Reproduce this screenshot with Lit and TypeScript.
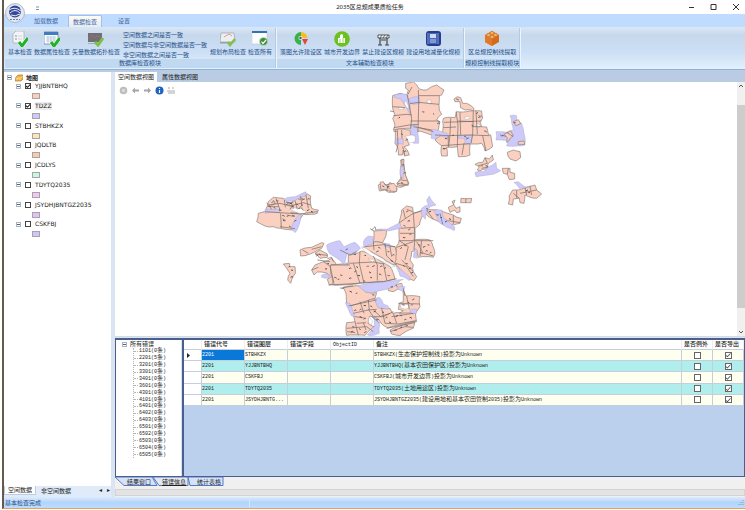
import { LitElement, html, svg, css } from "lit";
import { customElement } from "lit/decorators.js";

type Shape = string;

/* Survey parcels, north-east sheet. */
const northFarm: Shape[] = [
  "107,25 130,20 140,30 148,42 170,45 185,35 200,30 222,45 215,60 208,62 207,90 208,105 215,118 200,135 210,140 205,165 185,180 150,168 140,172 120,160 70,165 75,150 68,130 75,120 68,100 68,62 90,55 110,60 115,45 107,40",
  "75,165 100,162 120,165 125,185 110,190 118,210 102,215 112,225 118,240 103,243 100,225 97,240 85,240 82,215 75,205",
  "220,130 255,128 260,110 300,108 335,108 338,130 330,140 335,155 350,156 355,178 362,180 368,215 345,228 335,205 300,207 300,240 265,245 262,215 230,217 232,243 215,243 215,212 205,205 195,195 215,180 220,150",
  "252,72 262,65 272,68 278,85 290,85 300,90 312,100 310,107 285,105 272,98 270,80 255,80",
  "412,232 430,225 450,230 452,248 438,258 420,252",
  "315,268 338,262 345,248 358,252 367,240 370,255 355,265 350,282 330,288 322,285 328,275",
  "397,280 420,280 420,292 434,295 434,312 418,314 412,298 400,295",
  "428,345 445,345 495,330 500,345 515,357 500,370 465,360 462,385 450,383 448,370 430,372 428,390 415,387 418,362",
  "92,255 100,252 104,290 110,310 117,325 100,335 80,335 85,320 92,310",
  "25,330 35,325 50,335 60,322 70,330 82,342 75,352 55,352 45,345 28,348",
];
const northBuilt: Shape[] = [
  "72,60 90,56 110,58 122,80 120,118 112,104 100,84 92,72 74,68",
  "116,72 132,65 148,66 150,85 128,88",
  "122,152 138,150 146,205 130,205 134,182 122,178",
  "185,163 235,178 232,188 205,180 198,193 183,190",
  "76,192 100,192 100,208 78,208",
  "262,182 305,180 303,207 285,207 284,190 264,190",
  "420,122 440,122 440,135 455,145 462,175 465,210 410,213 414,198 378,195 378,170 410,172 430,165 425,145",
  "315,292 340,290 355,275 378,262 380,280 392,287 370,298 318,305",
  "432,322 445,320 465,335 485,332 462,340 448,340",
  "92,275 98,275 98,305 90,300",
];
const northInset: Shape[] = [
  "430,140 445,134 452,146 437,152",
  "402,178 422,168 430,182 416,198 410,202 412,188",
  "445,200 462,198 464,209 444,208",
];
const northGaps: Shape[] = [
  "172,75 183,75 183,88 172,84",
  "86,96 98,94 102,102 88,104",
  "103,76 112,84 117,102 109,97",
  "105,184 124,180 136,184 135,200 118,204 112,192",
  "283,127 298,124 300,130 286,134",
  "320,145 330,150 328,158 320,154",
];
const northLines: Shape[] = [
  "112,60 125,130 122,160", "145,45 146,90 144,170", "120,86 145,82 207,88", "145,62 208,62", "70,122 110,118 125,120",
  "122,138 200,138 210,140", "72,158 118,150 145,148", "69,95 105,98", "148,158 190,170", "82,165 84,210 78,232",
  "95,165 96,190", "130,155 185,165", "242,130 240,180 236,215", "258,110 264,150 262,215", "310,108 308,180 303,205", "270,112 272,180",
  "222,142 335,138", "195,180 235,182 300,180 358,182", "338,182 348,228", "215,212 300,206", "265,138 310,140", "318,108 322,178",
  "325,122 336,124", "235,182 235,215", "282,205 276,240", "220,158 258,156", "305,155 335,155", "410,172 430,185", "390,180 408,184",
  "345,248 352,265 325,272", "335,280 355,276", "465,338 470,360", "480,334 485,360", "450,355 500,345", "430,355 448,370",
  "440,346 440,370", "415,280 412,298", "80,170 70,168", "60,108 72,110", "98,214 104,240", "126,36 114,58",
  "95,285 106,292", "88,320 112,318", "45,340 60,330", "30,335 55,346", "66,330 60,350", "190,114 192,120", "218,222 230,220",
];

/* Survey parcels, south-west sheet. */
const southFarm: Shape[] = [
  "85,155 100,142 130,145 150,160 165,150 190,130 212,138 215,175 235,180 232,190 190,193 180,208 175,225 160,240 122,235 100,230 75,228 50,215 55,190 75,185",
  "180,300 215,292 245,278 252,280 245,295 220,308 182,318",
  "130,342 148,340 150,350 165,350 166,370 152,400 143,390 150,370 140,355",
  "215,360 225,345 250,335 275,325 290,345 305,370 320,340 335,400 268,405 262,388 272,382 262,370 245,366 232,366 222,375",
  "225,310 240,300 262,312 262,322 240,325",
  "272,345 325,340 325,315 365,303 400,318 450,350 465,388 430,395 350,402 280,405 272,370",
  "370,292 398,275 430,280 465,290 475,340 465,345 430,325",
  "402,243 440,240 438,258 428,278 400,275",
  "478,215 485,180 500,168 518,172 520,190 545,182 552,192 538,225 525,235 522,270 570,270 585,310 580,322 535,322 530,300 515,305 510,330 520,345 520,365 530,380 522,392 505,385 465,340 468,290 478,270",
  "420,97 430,95 435,105 450,102 462,100 470,112 470,125 445,122 422,118",
  "485,30 492,28 495,65 500,85 505,105 480,108 470,100 484,88",
  "560,180 600,182 640,195 664,205 660,220 640,225 625,222 610,225 580,208 560,195",
  "625,172 640,165 645,150 636,155 648,175 660,170 660,186 650,188 644,180 630,187",
  "663,145 695,145 693,158 662,158",
  "310,412 360,408 375,425 410,428 405,445 340,470 320,460 318,430",
  "330,470 405,447 415,472 450,475 458,490 478,488 525,485 530,515 445,534 425,522 412,505 390,498 384,520 402,530 375,556 320,556 320,518 345,515 335,490",
  "488,412 498,438 540,440 540,470 525,490 478,490 490,482 475,478 478,460 490,455",
  "446,410 485,400 488,410 460,425 445,422",
  "450,540 525,516 520,535 480,557 455,552",
];
const southBuilt: Shape[] = [
  "130,148 165,140 198,125 198,138 165,152 140,155",
  "70,185 80,178 120,178 118,188 75,190",
  "165,208 184,192 176,228 165,248 153,235",
  "260,285 300,272 312,290 345,277 362,295 350,305 320,312 315,335 325,345 310,342 280,318 268,310",
  "370,275 385,258 400,260 402,280 372,292",
  "405,240 440,238 480,218 484,232 440,243",
  "545,175 565,165 560,150 568,138 588,165 570,170 562,185 556,208 545,195",
  "580,182 606,180 612,205 622,210 645,232 643,242 620,232 595,215",
  "355,408 430,395 490,388 465,408 440,418 400,428 375,425",
  "468,348 485,360 510,382 508,392 480,378",
  "432,280 450,282 450,292 434,290",
  "525,295 532,300 532,325 520,322",
  "405,445 418,442 430,462 445,468 445,478 415,474",
  "316,458 330,460 345,500 335,498",
  "400,502 412,505 420,525 418,550 402,556 382,555 402,532",
  "510,480 530,478 530,490 515,492",
  "245,375 268,373 266,384 245,382",
  "482,48 490,52 490,85 484,82",
  "470,412 495,410 490,424 478,420",
];
const southGaps: Shape[] = [
  "150,176 185,176 200,186 190,192 166,186",
  "365,290 395,308 430,328 467,348 455,352 420,330 372,302",
  "384,325 405,328 398,338",
  "480,465 508,465 506,475 485,475",
  "388,500 398,515 394,525 385,515",
];
const southLines: Shape[] = [
  "75,185 180,192 232,185", "122,190 124,235", "108,145 120,180", "85,165 120,160 150,168 190,158 212,165", "133,150 136,172", "80,158 95,178",
  "90,170 115,170", "165,152 172,178", "182,138 186,170", "198,135 205,175", "100,150 106,160 94,166", "158,166 150,178", "140,195 165,200", "180,168 190,182",
  "145,162 155,170", "155,160 160,176", "152,188 175,190", "128,205 135,215", "120,230 165,236", "175,148 190,146", "138,158 160,157",
  "250,335 270,348 282,400", "266,405 320,402 430,395 470,386", "340,340 360,400", "360,305 358,340 372,400", "328,340 400,336 432,342", "400,318 412,345 412,392",
  "430,340 440,390", "272,345 330,345", "435,280 440,318", "400,275 402,300", "375,290 430,284 465,290", "440,318 470,345", "450,290 455,320",
  "478,218 520,190 545,182", "520,190 525,260 522,300", "478,272 580,272", "482,235 522,232", "478,272 505,290 495,330", "470,292 520,275", "530,275 550,310 580,318",
  "485,330 520,365", "468,340 500,350 520,380", "500,178 518,185", "490,180 496,205", "480,250 522,250", "545,272 540,318",
  "325,468 410,450", "340,490 385,480 410,478", "385,478 400,500 430,500 460,485", "360,455 372,490", "425,475 435,520 475,522 528,512", "440,535 525,518", "345,515 355,556",
  "320,535 380,530 400,545", "370,518 378,540", "420,500 450,490", "460,490 470,520", "400,480 420,498", "395,500 420,520", "475,460 540,462", "500,438 508,478",
  "490,415 495,438", "455,500 520,490", "450,545 495,530 520,532", "345,500 378,505", "385,450 388,480", "305,414 340,408", "322,545 345,548", "350,520 378,518",
  "300,300 330,315 350,305", "215,360 235,352", "225,312 262,316", "188,300 205,310", "215,298 245,290", "232,330 270,335", "600,190 608,222", "640,196 640,222", "560,180 580,208", "678,145 677,158", "625,212 660,218",
  "395,240 405,230 408,240", "390,236 402,243", "433,100 450,118", "445,102 440,122", "484,90 500,92", "472,100 505,105", "300,414 312,416", "262,326 275,322 280,335",
];
/* Settlement marks scattered over the farmland. */
const southMarks: number[][] = [
  [98,158],[112,152],[88,170],[104,172],[142,164],[152,160],[160,170],[172,162],[190,150],[186,164],[206,148],[130,196],[144,200],[160,196],[132,212],[150,228],[166,214],[120,180],[178,176],[216,184],[204,182],
  [265,340],[258,358],[286,382],[296,390],[304,375],[330,356],[352,350],[346,366],[356,376],[384,350],[390,366],[400,350],[394,382],[424,350],[420,372],[436,356],[446,376],[330,386],[374,392],[320,300],[344,312],[376,318],
  [418,292],[412,306],[446,304],[460,316],[455,332],[484,296],[496,286],[506,214],[494,226],[508,240],[492,262],[512,254],[538,284],[552,292],[566,284],[560,304],[544,308],[572,310],[500,340],[510,356],[492,346],[516,370],
  [374,466],[362,480],[394,468],[404,486],[430,486],[346,482],[362,500],[374,508],[340,530],[336,546],[360,536],[376,548],[412,508],[440,504],[450,516],[470,500],[484,496],[496,510],[512,502],[484,534],[500,526],[466,542],[506,456],[520,450],[490,464],[516,466],
  [430,108],[444,112],[490,44],[494,70],[486,98],[148,352],[156,360],[155,382],[240,312],[232,318],[592,194],[604,204],[630,206],[618,216],[562,176],[570,186],[332,424],[350,432],[400,434],[455,412],[470,406],[502,186],
];
const northMarks: number[][] = [
  [88,130],[160,110],[205,146],[96,176],[110,196],[228,190],[250,182],[286,184],[292,192],[308,150],[328,128],[346,168],[398,184],[434,142],[96,288],[98,300],[50,338],[62,340],[336,274],[350,272],[470,348],[478,352],[106,230],[262,72],[322,116],[222,220],
];

/* Breaks long straight edges into short uneven steps, as surveyed borders have. */
const rough = (shape: Shape): string => {
  const pts = shape.split(" ").map((p) => p.split(",").map(Number));
  return pts
    .flatMap(([x, y], i) => {
      const [nx, ny] = pts[(i + 1) % pts.length];
      const len = Math.hypot(nx - x, ny - y);
      const steps = Math.max(1, Math.floor(len / 10));
      return Array.from({ length: steps }, (_, k) => {
        const t = k / steps;
        const off = k === 0 ? 0 : ((i * 7 + k * 5 + x) % 5) - 2;
        return `${Math.round(x + (nx - x) * t - ((ny - y) / len) * off)},${Math.round(y + (ny - y) * t + ((nx - x) / len) * off)}`;
      });
    })
    .join(" ");
};

const layer = (cls: string, shapes: Shape[]) => svg`<g class=${cls}>${shapes.map((p) => svg`<polygon points=${rough(p)} />`)}</g>`;
const lines = (shapes: Shape[]) => svg`<g class="line">${shapes.map((p) => svg`<polyline points=${p} />`)}</g>`;
const marks = (pts: number[][]) =>
  svg`<g class="mark">${pts.map(([x, y], i) => svg`<path d=${`M${x - 3},${y}l${i % 3 + 2},${(i % 2) * 3 - 2}l3,${i % 4 - 1}`} />`)}</g>`;

const tick = svg`<path d="M7 11l3 4 6-8" fill="none" stroke="#fff" stroke-width="4"/><path d="M7 11l3 4 6-8" fill="none" stroke="#22b22a" stroke-width="3"/>`;
const icon = {
  doc: svg`<path d="M1 3l3-3h8v12H1z" fill="#f2f4f6" stroke="#a3a9b0" stroke-width=".7"/><path d="M3 5h2M3 8h2" stroke="#8d949c"/><path d="M6 5h4M6 8h4" stroke="#c1c7ce" stroke-width=".7"/>${tick}`,
  table: svg`<path d="M0 1h14v12H0z" fill="#fff" stroke="#4d78a8" stroke-width=".7"/><path d="M0 1h14v3H0z" fill="#3f7cc0"/><path d="M2 6h10M2 8h10M2 10h10M4 5v7M7 5v7M10 5v7" stroke="#9fb6cf" stroke-width=".6"/>${tick}`,
  topo: svg`<path d="M0 2h14v9H0z" fill="#6b7178"/><path d="M1 8l3-4 3 3 2-2 4 1" stroke="#d65a5a" stroke-width=".8" fill="none"/><path d="M0 12h12v1H0z" fill="#a5acb3"/><path d="M7 11l3 3 5-7" stroke="#7cc142" stroke-width="3" fill="none"/>`,
  plan: svg`<path d="M1 2h13l1 9H0z" fill="#eceff2" stroke="#9aa2ab" stroke-width=".7"/><path d="M4 6l5-3 3 2" fill="none" stroke="#d99" stroke-width="1"/><path d="M0 11h13v1.500H0z" fill="#98a0aa"/><path d="M8 11l2 3 5-6" stroke="#83c145" stroke-width="2.500" fill="none"/>`,
  all: svg`<path d="M0 0h15v13H0z" fill="#fcfdfe" stroke="#b6c2cf" stroke-width=".5"/><path d="M0 0h15v2H0z" fill="#2e73b8"/><circle cx="11.500" cy="10.500" r="4" fill="#3c8f35" stroke="#d6e6d4" stroke-width=".6"/><path d="M9.500 10.500l1.500 2 3-3.500" fill="none" stroke="#fff" stroke-width="1.200"/>`,
  pie: svg`<path d="M8 1a6.500 6.500 0 1 0 0 13z" fill="#35b249"/><path d="M8 1a6.500 6.500 0 0 1 6.500 6H8z" fill="#f5bd24"/><path d="M9 8h6l-3 6z" fill="#e8433c"/><circle cx="7.500" cy="7" r="2" fill="#e8f4e4"/><circle cx="7.500" cy="7" r="1.200" fill="#555"/>`,
  city: svg`<circle cx="8" cy="8" r="7.800" fill="#6cc01f"/><path d="M4 12V7h2V4l2-1 1 1v3h2v5z" fill="#fff"/><path d="M6 8v4M9 7v5" stroke="#6cc01f" stroke-width=".7"/>`,
  gate: svg`<path d="M3 4h11v3H3z" fill="#fff" stroke="#444" stroke-width=".9"/><path d="M5 7v7M12 7v7M3 14h4M10 14h4M6 9h5" stroke="#444" stroke-width="1.200"/><path d="M5 7l2-3M8 7l2-3M11 7l2-3" stroke="#444" stroke-width=".8"/>`,
  book: svg`<path d="M1 3q0-3 3-3h9q3 0 3 3v9q0 3-3 3H4q-3 0-3-3z" fill="#243d8f"/><path d="M4 2h8v11H4z" fill="#4766ba"/><path d="M5 3h6v4H5z" fill="#cdd9f2"/><path d="M5 9h6M5 11h6" stroke="#b9c9ec"/><path d="M3 2v11M13 2v11" stroke="#8ba2dc"/>`,
  brick: svg`<path d="M1 4l7-4 7 4v7l-7 4-7-4z" fill="#d66a1c"/><path d="M1 4l7 3v8l-7-4z" fill="#e07a28"/><path d="M1 4l7-4 7 4-7 4z" fill="#e88a38"/><g fill="#f9c478" stroke="#b65a18" stroke-width=".5"><ellipse cx="8" cy="2" rx="2" ry="1.300"/><ellipse cx="4.500" cy="4" rx="2" ry="1.300"/><ellipse cx="11.500" cy="4" rx="2" ry="1.300"/><ellipse cx="8" cy="6" rx="2" ry="1.300"/></g>`,
};
const tool = (label: string, key: keyof typeof icon) =>
  html`<button class="tool"><svg viewBox="0 0 16 16" width="16" height="16">${icon[key]}</svg>${label}</button>`;

/* Latin runs are set one size down so that they take half a Chinese cell. */
const cells = (text: string) =>
  text.split(/([\x20-\x7e]+)/).map((part) => (/^[\x20-\x7e]+$/.test(part) ? html`<span class="half">${part}</span>` : part));

const mapLayers: [string, string, boolean][] = [
  ["YJJBNTBHQ", "#fbcdbb", true],
  ["TDZZ", "#cdc9fb", true],
  ["STBHKZX", "#fbe3bb", false],
  ["JQDLTB", "#fbc9ab", false],
  ["JCDLYS", "#c0fbe0", false],
  ["TDYTQ2035", "#f3c6fb", false],
  ["JSYDHJBNTGZ2035", "#e4c0f8", false],
  ["CSKFBJ", "#cfc6fb", false],
];
const errorCodes = [1101, 2201, 3201, 3301, 3401, 3601, 4301, 4101, 6401, 6402, 6403, 6501, 6502, 6503, 6504, 6505];
const errors = [
  ["STBHKZX", "STBHKZX(生态保护控制线)投影为Unknown"],
  ["YJJBNTBHQ", "YJJBNTBHQ(基本农田保护区)投影为Unknown"],
  ["CSKFBJ", "CSKFBJ(城市开发边界)投影为Unknown"],
  ["TDYTQ2035", "TDYTQ2035(土地用途区)投影为Unknown"],
  ["JSYDHJBNTG...", "JSYDHJBNTGZ2035(建设用地和基本农田管制2035)投影为Unknown"],
];

@customElement("app-root")
export class AppRoot extends LitElement {
  static styles = css`
    :host { display: block; font: 6px/8px "Noto Sans", "Noto Sans CJK SC", sans-serif; color: #222; }
    * { box-sizing: border-box; }
    button { font: inherit; color: inherit; background: none; border: 0; padding: 0; margin: 0; white-space: nowrap; }
    svg { display: block; flex: none; }
    .window { display: flex; flex-direction: column; min-height: 100vh; background: #fff; }
    .frame { flex: 1; display: flex; flex-direction: column; margin-left: 2px; border-left: 2px solid #655a4d; border-bottom: 1px solid #e5a552; margin-bottom: 2px; }

    .titlebar { position: relative; height: 14px; display: flex; align-items: center; justify-content: flex-end; background: #fff; }
    .orb { position: absolute; left: 1px; top: 3px; z-index: 2; }
    .quick { position: absolute; left: 31px; top: 6px; }
    .caption { flex: 1; text-align: center; padding-left: 48px; }
    .winbtns { display: flex; gap: 12px; padding-right: 5px; }

    .tabs { display: flex; align-items: flex-end; height: 13px; background: #bfdbff; padding-left: 20px; color: #3d659b; }
    .tabs button { height: 12px; width: 34px; margin-left: 5px; }
    .tabs .on { background: linear-gradient(#fdfbf3, #e4ecf6); border: 1px solid #a6c0e4; border-bottom: 0; border-radius: 2px 2px 0 0; }

    .ribbon { display: flex; height: 43px; padding: 1px; background: linear-gradient(#dbe7f4, #c7d8ec 20%, #ccdff4 60%, #e3f1ff); border-bottom: 1px solid #8fb3d8; color: #26518a; }
    .group { display: flex; flex-direction: column; border-right: 1px solid #b3cae6; box-shadow: 1px 0 #ecf4fd; margin-right: 1px; }
    .items { flex: 1; display: flex; gap: 2px; padding: 3px 3px 0; }
    .tool { display: flex; flex-direction: column; align-items: center; gap: 1px; }
    .checks { display: flex; flex-direction: column; gap: 2px; align-items: flex-start; margin: 0 1px; }
    .groupname { height: 9px; line-height: 9px; text-align: center; background: #c1d8f1; }

    .body { flex: 1; display: flex; background: #dbe5f1; border-top: 2px solid #b9cce4; }
    .side { width: 107px; flex: none; display: flex; flex-direction: column; background: #fff; }
    .tree { flex: 1; padding: 1px 0 0 3px; }
    .node { display: flex; align-items: center; height: 9px; gap: 3px; }
    .root { font-weight: 700; }
    .layers { height: 158px; display: flex; flex-direction: column; padding-left: 9px; font-family: "DejaVu Sans", sans-serif; }
    .layer { flex: 1; }
    .name { display: flex; align-items: center; gap: 4px; }
    .picked { background: #ececec; }
    .swatch { width: 8px; height: 6px; margin: 3px 0 0 16px; border: 1px solid #aaa3a3; }
    .exp { width: 5px; height: 5px; border: 1px solid #a9b5c4; background: linear-gradient(#567, #567) center / 3px 1px no-repeat #fff; flex: none; }
    .exp.err { margin-right: 1px; }

    input[type="checkbox"] { appearance: none; width: 6px; height: 6px; margin: 0; border: 1px solid #444; background: #fff; flex: none; position: relative; display: block; }
    input[type="checkbox"]:checked::before { content: ""; position: absolute; inset: 0; background: #222; clip-path: polygon(0 40%, 40% 65%, 100% 0, 100% 40%, 40% 100%, 0 75%); }
    td input[type="checkbox"] { width: 7px; height: 7px; margin: 0 auto; border-color: #666; }
    td input[type="checkbox"]:checked::before { background: #555; clip-path: polygon(0 45%, 40% 70%, 100% 5%, 100% 30%, 40% 95%, 0 65%); }

    .sidetabs { height: 11px; display: flex; align-items: flex-start; background: #dfebf9; }
    .sidetabs button { height: 9px; padding: 0 3px; margin-right: 2px; }
    .sidetabs .on { background: #fff; border: 1px solid #bccbe0; border-top: 0; }
    .sidetabs .arrows { margin-left: auto; padding-right: 1px; display: flex; gap: 5px; line-height: 9px; }

    .main { flex: 1; min-width: 0; display: flex; flex-direction: column; margin-left: 4px; }
    .viewtabs { display: flex; height: 10px; background: #b9cce4; gap: 2px; }
    .viewtabs button { padding: 0 3px; height: 10px; }
    .viewtabs .on { background: #fff; }
    .mapview { flex: 1; display: flex; background: #fff; border: 1px solid #d3dbe6; border-width: 0 0 1px; }
    .canvas { flex: 1; min-width: 0; position: relative; overflow: hidden; }
    .maptools { position: absolute; left: 4px; top: 4px; display: flex; gap: 3px; }
    .scroll { width: 8px; background: #f0f0f0; display: flex; flex-direction: column; justify-content: space-between; align-items: center; padding: 2px 0; }
    .thumb { flex: 1; align-self: stretch; background: #cdcdcd; margin: 17px 0 22px; }
    .farm { fill: #fbd0c0; stroke: #857d79; stroke-width: 2; }
    .built { fill: #cdc9f8; stroke: #9c98b4; stroke-width: 1; }
    .gap { fill: #fff; stroke: #999; stroke-width: 1; }
    .line { fill: none; stroke: #6d6866; stroke-width: 2; }
    .mark { fill: none; stroke: #555050; stroke-width: 3; }

    .results { display: flex; height: 139px; margin-top: 1px; border: 1px solid #4a5f8e; border-top-width: 2px; background: #dbe5f1; }
    .errtree { width: 65px; background: #fff; padding: 0 0 0 6px; font: 6px/7px "Liberation Mono", "Noto Sans CJK SC", monospace; }
    .errtree .node { height: 8px; gap: 2px; }
    .codes { height: 110px; display: flex; flex-direction: column; margin-left: 11px; border-left: 1px dotted #b5b5b5; line-height: 4px; }
    .code { flex: 1; min-height: 0; display: flex; align-items: center; gap: 1px; }
    .code::before { content: ""; width: 4px; border-top: 1px dotted #b5b5b5; }
    .half { font-size: 5px; }
    .grid { flex: 1; min-width: 0; margin-left: 1px; border-left: 2px solid #4a5f8e; background: #bad0ec; font: 6px/8px "Liberation Mono", "Noto Sans CJK SC", monospace; }
    table { width: 100%; height: 66px; table-layout: fixed; border-collapse: separate; border-spacing: 0; }
    th, td { padding: 0; height: 10px; text-align: left; font-weight: 400; border: 0 solid #c3cfdc; border-width: 0 1px 1px 0; white-space: nowrap; overflow: hidden; }
    th { background: #fff; border-right-color: #eee; padding-left: 2px; font-weight: 500; }
    td { height: 11px; background: #fffff0; }
    tr:nth-child(even) td { background: #b0eeee; }
    tbody tr td:first-child { background: #fff; padding-left: 3px; }
    tbody tr .sel { background: #0a78d8; color: #fff; }
    .c0 { width: 18px; } .c1 { width: 43px; } .c2 { width: 31px; }

    .sheets { position: relative; height: 10px; display: flex; padding-left: 12px; gap: 11px; background: #f0f0f0; }
    .sheets svg { position: absolute; left: 0; top: 0; }
    .sheets button { position: relative; height: 9px; }
    .sheets .on { text-decoration: underline; }
    .hscroll { height: 7px; background: #e3e3e3; border: 1px solid #d3d3d3; }
    .underbar { height: 10px; background: #f0f0f0; padding-top: 2px; }
    .status { display: flex; align-items: center; height: 11px; padding: 0 1px; background: linear-gradient(#dcebfd, #b3d4fb 50%, #bddcff); color: #2c5286; }
    .status .first { width: 245px; border-right: 1px solid #d8e8fb; }
    .status svg { margin-left: auto; }
  `;

  private titleBar() {
    return html`<header class="titlebar">
      <svg class="orb" width="20" height="20" viewBox="0 0 20 20">
        <circle cx="10" cy="10" r="9.500" fill="#e3e7ee" stroke="#a3adbb" stroke-width=".8" />
        <circle cx="10" cy="8.500" r="6" fill="#34479b" />
        <path d="M4 7q6-4 12 1M5 10q5-5 10 0M6 12q4 2 9-1" fill="none" stroke="#e7ecf8" stroke-width="1" />
        <path d="M5 16.500h10" stroke="#777f95" stroke-width="1" stroke-dasharray="2 1" />
      </svg>
      <svg class="quick" width="4" height="5" viewBox="0 0 4 5"><path d="M1 1h3M1 3.500h3" stroke="#7890b0" stroke-width="1" /></svg>
      <div class="caption">2035区总规成果质检任务</div>
      <div class="winbtns">
        <button aria-label="最小化"><svg width="8" height="8" viewBox="0 0 8 8"><path d="M1 4.500h5" stroke="#333" /></svg></button>
        <button aria-label="最大化"><svg width="10" height="8" viewBox="0 0 10 8"><path d="M3 1.500h5v5H3z" fill="none" stroke="#333" /></svg></button>
        <button aria-label="关闭"><svg width="10" height="8" viewBox="0 0 10 8"><path d="M3 1l6 6M9 1L3 7" stroke="#333" /></svg></button>
      </div>
    </header>`;
  }

  private ribbon() {
    return html`<nav class="tabs"><button>加载数据</button><button class="on">数据检查</button><button>设置</button></nav>
      <section class="ribbon">
        <div class="group">
          <div class="items">
            ${tool("基本检查", "doc")}${tool("数据属性检查", "table")}${tool("矢量数据拓扑检查", "topo")}
            <div class="checks"><button>空间数据之间是否一致</button><button>空间数据与非空间数据是否一致</button><button>非空间数据之间是否一致</button></div>
            ${tool("规划布局检查", "plan")}${tool("检查所有", "all")}
          </div>
          <div class="groupname">数据库检查模块</div>
        </div>
        <div class="group">
          <div class="items">${tool("落图允许建设区", "pie")}${tool("城市开发边界", "city")}${tool("禁止建设区规模", "gate")}${tool("建设用地减量化规模", "book")}</div>
          <div class="groupname">文本辅助检查模块</div>
        </div>
        <div class="group">
          <div class="items">${tool("区总规控制线提取", "brick")}</div>
          <div class="groupname">规模控制线提取模块</div>
        </div>
      </section>`;
  }

  private sidePanel() {
    return html`<aside class="side">
      <div class="tree">
        <div class="node root"><span class="exp"></span>
          <svg width="8" height="8" viewBox="0 0 8 8"><path d="M1 3l2-2h5v4L6 7H0z" fill="#f0b03c" stroke="#a87422" stroke-width=".6" /><path d="M1 4h5l2-2M1 5h5" stroke="#fff0c0" stroke-width=".6" fill="none" /></svg>地图</div>
        <div class="layers">${mapLayers.map(
          ([name, color, on]) => html`<div class="layer">
            <label class="name"><span class="exp"></span><input type="checkbox" .checked=${on} /><span class=${name === "TDZZ" ? "picked" : ""}>${name}</span></label>
            <div class="swatch" style="background:${color}"></div>
          </div>`
        )}</div>
      </div>
      <div class="sidetabs"><button class="on">空间数据</button><button>非空间数据</button><span class="arrows"><span>◂</span><span>▸</span></span></div>
    </aside>`;
  }

  private mapView() {
    return html`<div class="viewtabs"><button class="on">空间数据视图</button><button>属性数据视图</button></div>
      <section class="mapview">
        <div class="canvas">
          <svg width="622" height="254" viewBox="115 82 622 254">
            <g transform="translate(370 75) scale(.3333)">${layer("farm", northFarm)}${layer("built", northBuilt)}${layer("farm", northInset)}${layer("gap", northGaps)}${lines(northLines)}${marks(northMarks)}</g>
            <g transform="translate(240 150) scale(.3333)">${layer("farm", southFarm)}${layer("built", southBuilt)}${layer("gap", southGaps)}${lines(southLines)}${marks(southMarks)}</g>
          </svg>
          <div class="maptools">
            <svg width="9" height="9" viewBox="0 0 9 9"><circle cx="4.500" cy="4.500" r="3.800" fill="#bdbdbd" /><path d="M3 3h3v3H3z" fill="#d8d8d8" /></svg>
            <svg width="9" height="9" viewBox="0 0 9 9"><path d="M1 4.500l3-3v2h4v2H4v2z" fill="#a5a5a5" /></svg>
            <svg width="9" height="9" viewBox="0 0 9 9"><path d="M8 4.500l-3-3v2H1v2h4v2z" fill="#a5a5a5" /></svg>
            <svg width="9" height="9" viewBox="0 0 9 9"><circle cx="4.500" cy="4.500" r="4" fill="#1c63c0" /><path d="M4.500 2v1M4.500 4v3" stroke="#fff" stroke-width="1.200" /></svg>
            <svg width="9" height="9" viewBox="0 0 9 9"><path d="M1 2h2M5 2h2M0 5h8M1 7h7" stroke="#aaa" stroke-width="1.200" /></svg>
          </div>
        </div>
        <div class="scroll">
          <svg width="6" height="4" viewBox="0 0 6 4"><path d="M1 3l2-2 2 2" fill="none" stroke="#555" /></svg>
          <div class="thumb"></div>
          <svg width="6" height="4" viewBox="0 0 6 4"><path d="M1 1l2 2 2-2" fill="none" stroke="#555" /></svg>
        </div>
      </section>`;
  }

  private results() {
    return html`<section class="results">
        <div class="errtree">
          <div class="node"><span class="exp err"></span>所有错误</div>
          <div class="codes">${errorCodes.map((c) => html`<div class="code"><span>${cells(`${c}(${c === 2201 ? 5 : 0}条)`)}</span></div>`)}</div>
        </div>
        <div class="grid">
          <table>
            <colgroup><col class="c0" /><col class="c1" /><col class="c1" /><col class="c1" /><col class="c1" /><col /><col class="c2" /><col class="c2" /></colgroup>
            <thead><tr><th></th><th>错误代号</th><th>错误图层</th><th>错误字段</th><th>${cells("ObjectID")}</th><th>备注</th><th>是否例外</th><th>是否导出</th></tr></thead>
            <tbody>${errors.map(
              ([name, note], i) => html`<tr>
                <td>${i === 0 ? html`<svg width="4" height="5" viewBox="0 0 4 5"><path d="M0 0l3 2.500L0 5z" fill="#222" /></svg>` : ""}</td>
                <td class=${i === 0 ? "sel" : ""}>${cells("2201")}</td><td>${cells(name)}</td><td></td><td></td><td>${cells(note)}</td>
                <td><input type="checkbox" aria-label="是否例外" /></td><td><input type="checkbox" aria-label="是否导出" .checked=${true} /></td>
              </tr>`
            )}</tbody>
          </table>
        </div>
      </section>
      <div class="sheets">
        <svg width="112" height="10" viewBox="0 0 112 10"><path d="M0 0l9 8.500h33L37 0z" fill="#d5e3fa" stroke="#5478c4" /><path d="M38 0l6 8.500h29V0z" fill="#e4e7ee" stroke="#5478c4" /><path d="M73 0l2 8.500h33V0z" fill="#d5e3fa" stroke="#5478c4" /></svg>
        <button>结果窗口</button><button class="on">错误信息</button><button>统计表格</button>
      </div>
      <div class="underbar"><div class="hscroll"></div></div>`;
  }

  render() {
    return html`<div class="window"><div class="frame">
      ${this.titleBar()}${this.ribbon()}
      <div class="body">${this.sidePanel()}<main class="main">${this.mapView()}${this.results()}</main></div>
      <footer class="status"><span class="first">基本检查完成</span>
        <svg width="6" height="6" viewBox="0 0 6 6"><path d="M5 0v1M5 2v1M5 4v1M3 2v1M3 4v1M1 4v1" stroke="#7f9fc8" /></svg></footer>
    </div></div>`;
  }
}
